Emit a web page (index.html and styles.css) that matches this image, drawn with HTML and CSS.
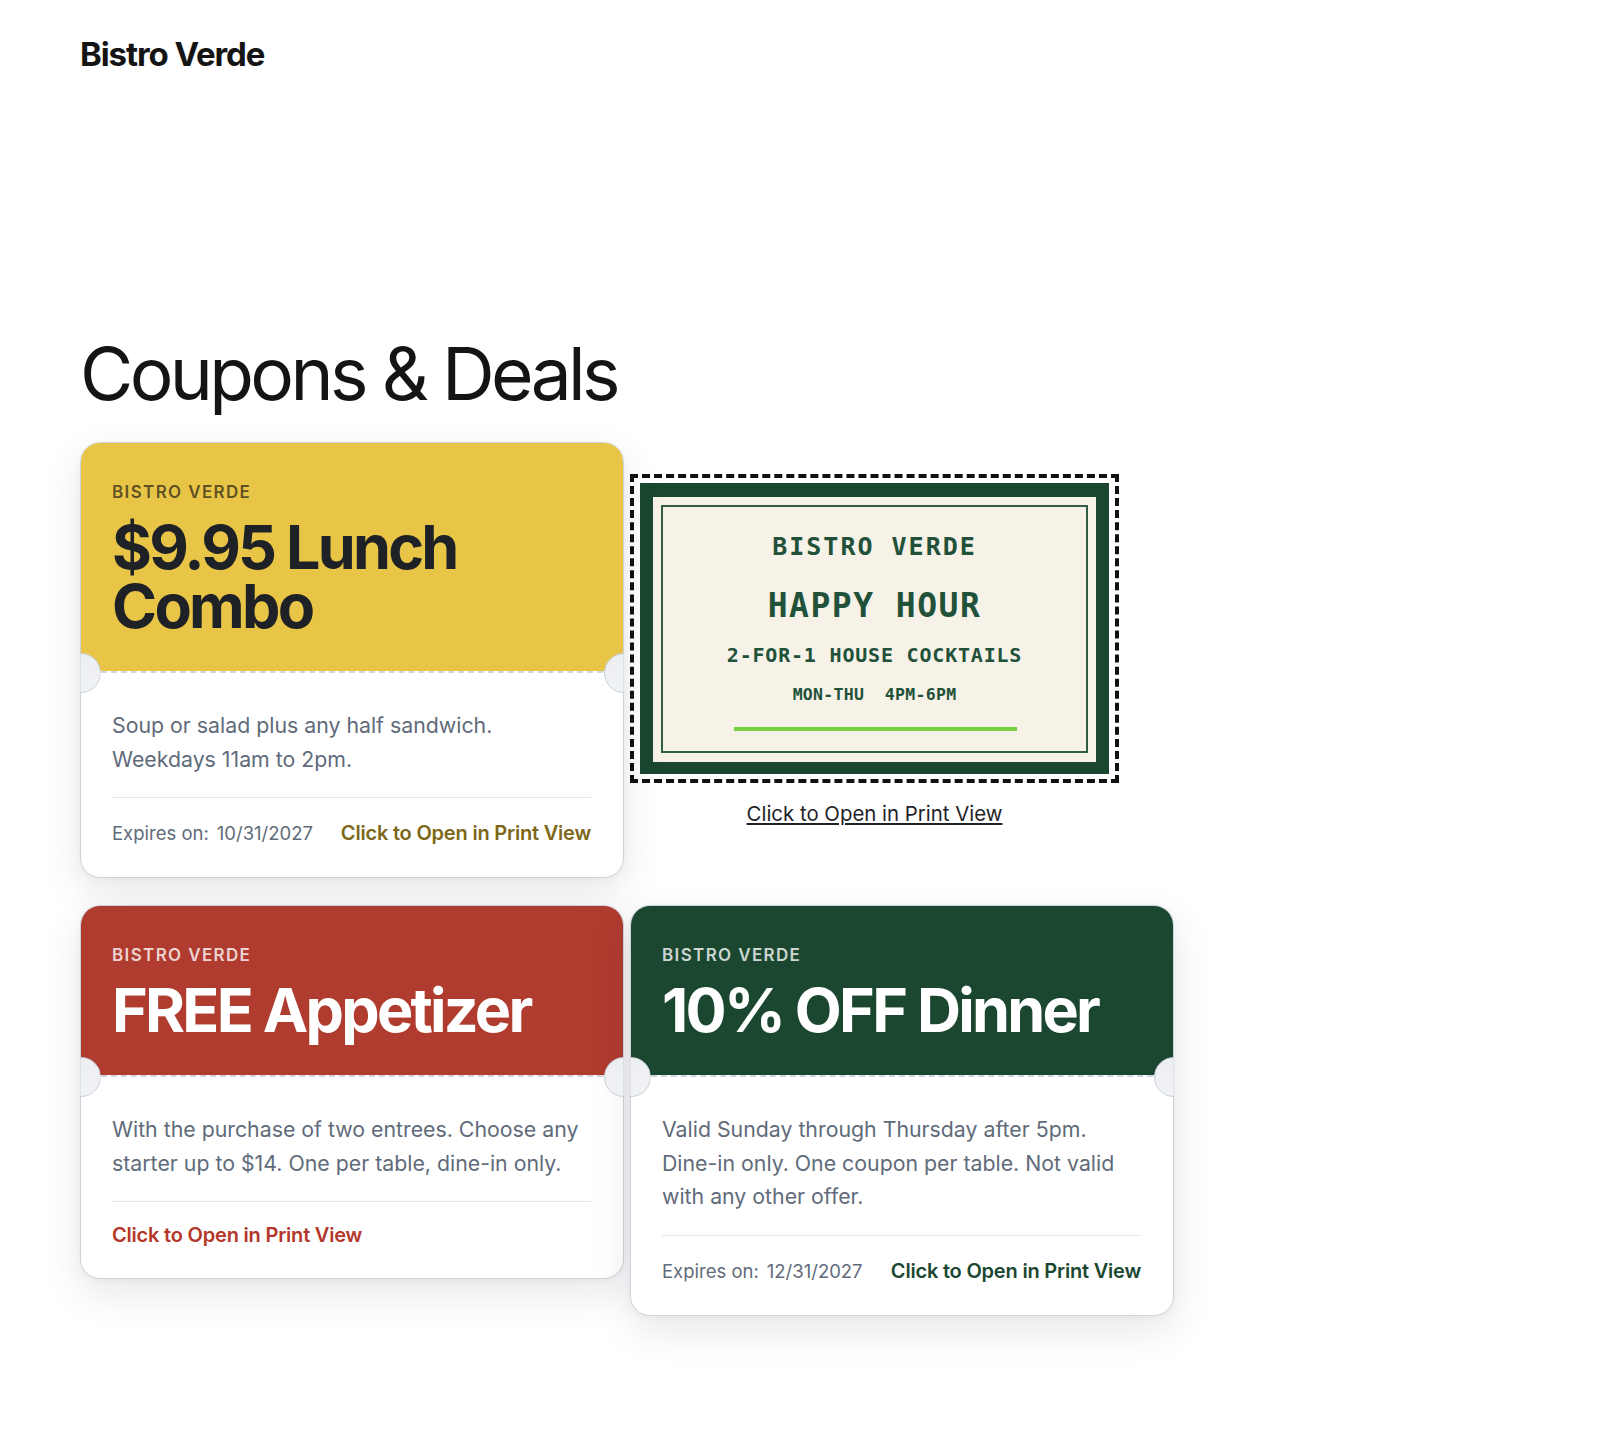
FILE: index.html
```html
<!DOCTYPE html>
<html lang="en">
<head>
<meta charset="utf-8">
<title>Coupons &amp; Deals - Bistro Verde</title>
<link rel="stylesheet" href="styles.css">
</head>
<body>
<div class="page">
  <header class="site-header">
    <div class="logo">Bistro Verde</div>
  </header>
  <main>
    <h1 class="page-title">Coupons &amp; Deals</h1>
    <div class="coupon-grid">
      <article class="coupon coupon-yellow">
        <div class="coupon-head">
          <div class="coupon-brand">BISTRO VERDE</div>
          <h2 class="coupon-title">$9.95 Lunch Combo</h2>
        </div>
        <div class="coupon-body">
          <p class="coupon-desc">Soup or salad plus any half sandwich. Weekdays 11am to 2pm.</p>
          <div class="coupon-foot">
            <span class="expires">Expires on:<span class="date">10/31/2027</span></span>
            <a class="print-link" href="#">Click to Open in Print View</a>
          </div>
        </div>
      </article>

      <div class="image-coupon">
        <div class="image-frame">
          <svg class="hh-svg" viewBox="0 0 469 291" width="469" height="291" xmlns="http://www.w3.org/2000/svg">
            <rect x="0" y="0" width="469" height="291" fill="#1b4731"/>
            <rect x="13" y="14" width="443" height="265" fill="#f6f2e7"/>
            <rect x="22" y="23" width="425" height="246" fill="none" stroke="#2f5e44" stroke-width="2"/>
            <text class="hh-t1" x="234.5" y="72" text-anchor="middle">BISTRO VERDE</text>
            <text class="hh-t2" x="234.5" y="134" text-anchor="middle">HAPPY HOUR</text>
            <text class="hh-t3" x="234.5" y="179" text-anchor="middle">2-FOR-1 HOUSE COCKTAILS</text>
            <text class="hh-t4" x="234.5" y="217" text-anchor="middle" xml:space="preserve">MON-THU  4PM-6PM</text>
            <rect x="94" y="244" width="283" height="4" fill="#79d043"/>
          </svg>
        </div>
        <a class="image-link" href="#">Click to Open in Print View</a>
      </div>

      <article class="coupon coupon-red">
        <div class="coupon-head">
          <div class="coupon-brand">BISTRO VERDE</div>
          <h2 class="coupon-title">FREE Appetizer</h2>
        </div>
        <div class="coupon-body">
          <p class="coupon-desc">With the purchase of two entrees. Choose any starter up to $14. One per table, dine-in only.</p>
          <div class="coupon-foot solo">
            <a class="print-link" href="#">Click to Open in Print View</a>
          </div>
        </div>
      </article>

      <article class="coupon coupon-green">
        <div class="coupon-head">
          <div class="coupon-brand">BISTRO VERDE</div>
          <h2 class="coupon-title">10% OFF Dinner</h2>
        </div>
        <div class="coupon-body">
          <p class="coupon-desc">Valid Sunday through Thursday after 5pm. Dine-in only. One coupon per table. Not valid with any other offer.</p>
          <div class="coupon-foot">
            <span class="expires">Expires on:<span class="date">12/31/2027</span></span>
            <a class="print-link" href="#">Click to Open in Print View</a>
          </div>
        </div>
      </article>
    </div>
  </main>
</div>
</body>
</html>
```

FILE: styles.css
```css
* { box-sizing: border-box; }

html, body {
  margin: 0;
  padding: 0;
  background: #ffffff;
}

body {
  font-family: Inter, "Noto Sans", "Liberation Sans", sans-serif;
  color: #1f2328;
}

.page {
  padding: 34px 80px 80px 80px;
}

.site-header {
  height: 40px;
}

.logo {
  font-size: 33px;
  line-height: 40px;
  font-weight: 700;
  letter-spacing: -0.033em;
  color: #141414;
}

.page-title {
  margin: 260px 0 29px 0;
  font-size: 73px;
  line-height: 79px;
  font-weight: 400;
  letter-spacing: -0.05em;
  color: #141414;
}

.coupon-grid {
  display: grid;
  grid-template-columns: 544px 544px;
  column-gap: 6px;
  row-gap: 27px;
  align-items: start;
}

.coupon {
  position: relative;
  border: 1.5px solid #cdd3dc;
  border-radius: 20px;
  background: #ffffff;
  box-shadow: 0 14px 40px rgba(15, 23, 42, 0.10), 0 2px 6px rgba(15, 23, 42, 0.04);
}

.coupon-head {
  padding: 37px 32px 35px 31px;
  border-radius: 19px 19px 0 0;
}

.coupon-brand {
  font-size: 17px;
  line-height: 24px;
  font-weight: 600;
  letter-spacing: 0.08em;
  margin-bottom: 14px;
}

.coupon-title {
  margin: 0;
  font-size: 61px;
  line-height: 59px;
  font-weight: 700;
  letter-spacing: -0.045em;
}

.coupon-yellow .coupon-head { background: #e8c547; }
.coupon-yellow .coupon-brand { color: rgba(40, 35, 20, 0.72); }
.coupon-yellow .coupon-title { color: #1e2226; }
.coupon-yellow .print-link { color: #7d6718; }

.coupon-red .coupon-head { background: #b03b2f; }
.coupon-red .coupon-brand { color: rgba(255, 255, 255, 0.78); }
.coupon-red .coupon-title { color: #ffffff; }
.coupon-red .print-link { color: #b3372a; }

.coupon-green .coupon-head { background: #1b4731; }
.coupon-green .coupon-brand { color: rgba(255, 255, 255, 0.78); }
.coupon-green .coupon-title { color: #ffffff; }
.coupon-green .print-link { color: #1b4731; }

.coupon-body {
  position: relative;
  border-top: 2px dashed #d0d6de;
  padding: 36px 32px 32px 31px;
  border-radius: 0 0 19px 19px;
}

.coupon-body::before,
.coupon-body::after {
  content: "";
  position: absolute;
  top: -20px;
  width: 38px;
  height: 38px;
  border-radius: 50%;
  background: linear-gradient(180deg, #eceef1 0%, #f1f2f4 100%);
  border: 1.5px solid #c6ced8;
  z-index: 2;
}

.coupon-body::before {
  left: -20.5px;
  clip-path: inset(0 0 0 50%);
}

.coupon-body::after {
  right: -20.5px;
  clip-path: inset(0 50% 0 0);
}

.coupon-desc {
  margin: 0;
  font-size: 21.3px;
  line-height: 33.5px;
  color: #5f6b7a;
  letter-spacing: 0;
  padding-bottom: 21px;
  border-bottom: 1px solid #e2e6eb;
}

.coupon-foot {
  display: flex;
  justify-content: space-between;
  align-items: baseline;
  padding-top: 23px;
  line-height: 24px;
}

.coupon-foot.solo {
  padding-top: 21px;
  margin-bottom: -1px;
}

.expires {
  font-size: 18.5px;
  color: #5f6b7a;
}

.expires .date {
  margin-left: 8px;
}

.print-link {
  font-size: 20px;
  font-weight: 600;
  letter-spacing: -0.01em;
  text-decoration: none;
}

.image-coupon {
  margin-top: 32px;
  width: 489px;
  display: flex;
  flex-direction: column;
  align-items: center;
}

.image-frame {
  width: 489px;
  border: 4px dashed #111111;
  padding: 5px 6px;
  background: #ffffff;
  line-height: 0;
}

.hh-svg {
  display: block;
}

.hh-svg text {
  font-family: "DejaVu Sans Mono", "Liberation Mono", monospace;
  font-weight: 700;
  fill: #22513a;
}

.hh-t1 { font-size: 25px; letter-spacing: 2px; }
.hh-t2 { font-size: 33px; letter-spacing: 1.5px; }
.hh-t3 { font-size: 20px; letter-spacing: 0.8px; }
.hh-t4 { font-size: 16.5px; letter-spacing: 0.3px; }

.image-link {
  margin-top: 17px;
  font-size: 20.4px;
  line-height: 28px;
  color: #1f2328;
  text-decoration: underline;
}
```
